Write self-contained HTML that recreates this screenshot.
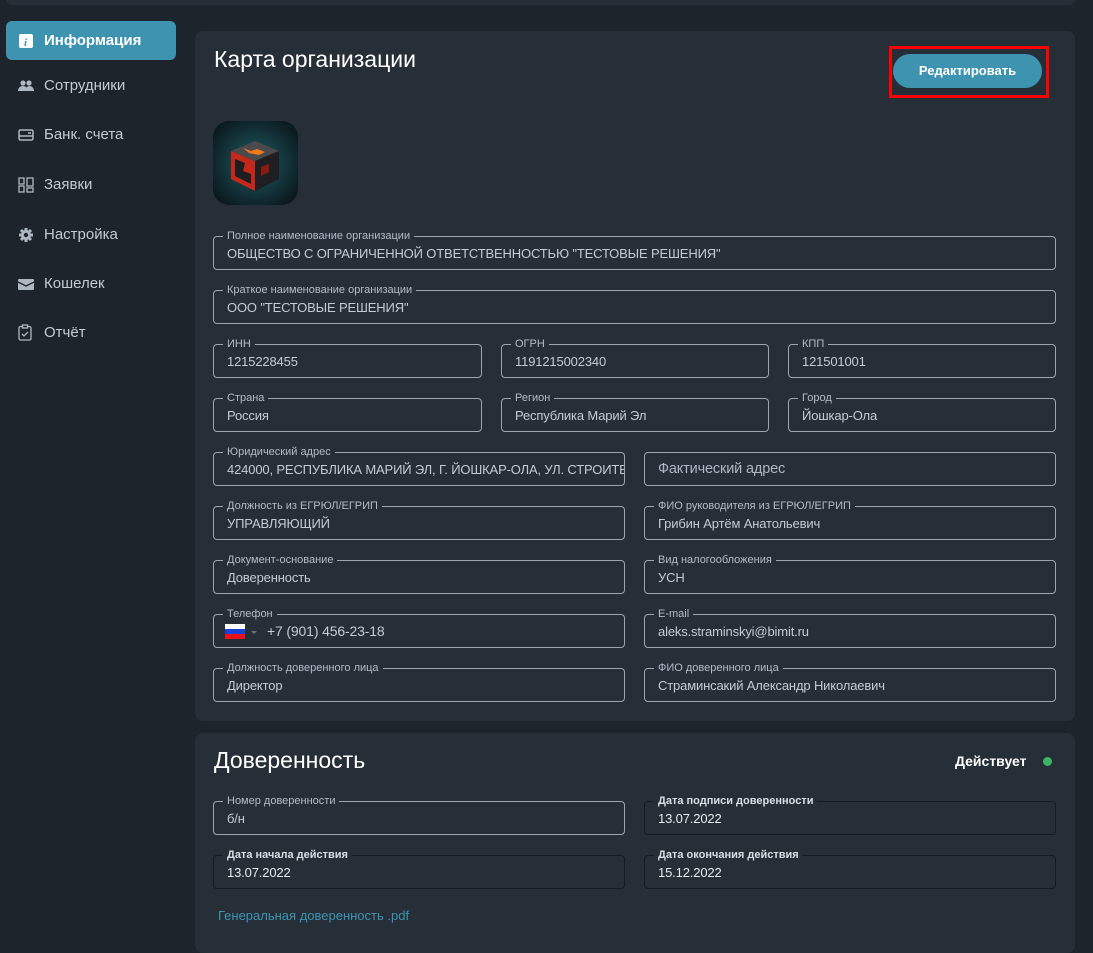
<!DOCTYPE html>
<html><head><meta charset="utf-8"><style>
*{box-sizing:border-box;margin:0;padding:0}
body{width:1093px;height:932px;background:#1d242b;font-family:"Liberation Sans",sans-serif;position:relative;overflow:hidden;color:#c3ccd5}
.topbar{position:absolute;left:6px;top:-10px;width:1069px;height:15px;background:#262f38;border-radius:6px}
.nav{position:absolute;left:6px;width:170px;height:39px;border-radius:6px;display:flex;align-items:center;font-size:15px;color:#c3ccd5}
.nav.act{background:#3e94b0;color:#fff;font-weight:bold}
.nav svg{position:absolute;left:12px}
.nav span{position:absolute;left:38px}
.card{position:absolute;left:195px;width:880px;background:#262f38;border-radius:8px}
h2{position:absolute;font-weight:normal;color:#fff;font-size:23px}
.f{position:absolute;height:34px;border:1px solid #9aa6b2;border-radius:4px;font-size:13px;letter-spacing:-0.15px;color:#c3ccd5;padding-left:13px;line-height:33px;white-space:nowrap}
.f label{position:absolute;top:-8px;left:9px;background:#262f38;padding:0 4px;font-size:11px;line-height:14px;color:#b3bdc7;letter-spacing:0}
.f .v{display:block;overflow:hidden;width:100%;padding-right:14px}
.f.d{border-color:#151b21}
.f.d label{font-weight:bold;color:#d8dee4}
.f.d .v{color:#e6ebef}
</style></head><body>
<div class="topbar"></div>

<div class="nav act" style="top:21px"><svg width="16" height="16" viewBox="0 0 16 16"><rect x="1" y="1" width="14" height="14" rx="2" fill="#fff"/><text x="6" y="13" font-size="11" font-style="italic" font-weight="bold" fill="#3e94b0" font-family="Liberation Serif">i</text></svg><span>Информация</span></div>
<div class="nav" style="top:66px"><svg width="16" height="14" viewBox="0 0 16 14"><circle cx="5" cy="4" r="2.6" fill="#aeb8c2"/><circle cx="11" cy="4" r="2.6" fill="#aeb8c2"/><path d="M0 12c0-3 2-5 5-5s5 2 5 5zM8 12c0-3 1.5-5 3-5 3 0 5 2 5 5z" fill="#aeb8c2"/></svg><span>Сотрудники</span></div>
<div class="nav" style="top:115px"><svg width="16" height="14" viewBox="0 0 16 14"><rect x="1" y="2" width="14" height="10" rx="1.5" fill="none" stroke="#aeb8c2" stroke-width="1.5"/><path d="M1 8h14M10 5h3" stroke="#aeb8c2" stroke-width="1.5"/></svg><span>Банк. счета</span></div>
<div class="nav" style="top:165px"><svg width="16" height="16" viewBox="0 0 16 16" fill="none" stroke="#aeb8c2" stroke-width="1.3"><rect x="1" y="1" width="5" height="6"/><rect x="1" y="9" width="5" height="6"/><rect x="9" y="1" width="6" height="8"/><rect x="9" y="11" width="6" height="4"/></svg><span>Заявки</span></div>
<div class="nav" style="top:215px"><svg width="16" height="16" viewBox="0 0 16 16"><circle cx="8" cy="8" r="5" fill="#aeb8c2"/><g stroke="#aeb8c2" stroke-width="3"><path d="M8 1v14M1 8h14M3 3l10 10M13 3L3 13"/></g><circle cx="8" cy="8" r="2.2" fill="#1d242b"/></svg><span>Настройка</span></div>
<div class="nav" style="top:264px"><svg width="16" height="14" viewBox="0 0 16 14"><rect x="0" y="2" width="16" height="11" rx="1" fill="#aeb8c2"/><path d="M0 5l8 4 8-4" stroke="#1d242b" stroke-width="1.3" fill="none"/></svg><span>Кошелек</span></div>
<div class="nav" style="top:313px"><svg width="14" height="17" viewBox="0 0 14 17" fill="none" stroke="#aeb8c2" stroke-width="1.3"><rect x="1" y="2.5" width="12" height="13.5" rx="1.5"/><rect x="4.5" y="1" width="5" height="3" fill="#1d242b"/><path d="M4 10l2 2 4-4"/></svg><span>Отчёт</span></div>

<div class="card" style="top:31px;height:690px">
 <h2 style="left:19px;top:15px">Карта организации</h2>
 <div style="position:absolute;left:694px;top:15px;width:160px;height:52px;border:3px solid #f00"></div>
 <div style="position:absolute;left:698px;top:23px;width:149px;height:34px;border-radius:17px;background:#3e94b0;color:#fff;font-weight:bold;font-size:13px;text-align:center;line-height:34px">Редактировать</div>
 <svg style="position:absolute;left:18px;top:90px" width="85" height="84" viewBox="0 0 85 84"><defs><radialGradient id="g" cx="50%" cy="50%" r="60%"><stop offset="0" stop-color="#1f5d66"/><stop offset="1" stop-color="#0b1a1e"/></radialGradient></defs><rect width="85" height="84" rx="16" fill="url(#g)"/><path d="M18 30l24-10 24 10v28l-24 12-24-12z" fill="#2a2a2c"/><path d="M18 30l24 10v30l-24-12z" fill="#c3281a"/><path d="M22 38l10 4-2 8 8 3v10l-16-8z" fill="#1e1e20"/><path d="M18 30l24-10 24 10-24 10z" fill="#4a4a4c"/><path d="M30 27l8 3 6-2 8 3-6 3-10-2z" fill="#f07a1a"/><path d="M42 40l24-10v28l-24 12z" fill="#1f1f21"/><path d="M48 46l8-3v8l-8 4z" fill="#8b1b12"/></svg>

 <div class="f" style="left:18px;top:205px;width:843px"><label>Полное наименование организации</label><span class="v">ОБЩЕСТВО С ОГРАНИЧЕННОЙ ОТВЕТСТВЕННОСТЬЮ "ТЕСТОВЫЕ РЕШЕНИЯ"</span></div>
 <div class="f" style="left:18px;top:259px;width:843px"><label>Краткое наименование организации</label><span class="v">ООО "ТЕСТОВЫЕ РЕШЕНИЯ"</span></div>

 <div class="f" style="left:18px;top:313px;width:269px"><label>ИНН</label><span class="v">1215228455</span></div>
 <div class="f" style="left:306px;top:313px;width:268px"><label>ОГРН</label><span class="v">1191215002340</span></div>
 <div class="f" style="left:593px;top:313px;width:268px"><label>КПП</label><span class="v">121501001</span></div>

 <div class="f" style="left:18px;top:367px;width:269px"><label>Страна</label><span class="v">Россия</span></div>
 <div class="f" style="left:306px;top:367px;width:268px"><label>Регион</label><span class="v">Республика Марий Эл</span></div>
 <div class="f" style="left:593px;top:367px;width:268px"><label>Город</label><span class="v">Йошкар-Ола</span></div>

 <div class="f" style="left:18px;top:421px;width:412px"><label>Юридический адрес</label><span class="v">424000, РЕСПУБЛИКА МАРИЙ ЭЛ, Г. ЙОШКАР-ОЛА, УЛ. СТРОИТЕЛЕЙ</span></div>
 <div class="f" style="left:449px;top:421px;width:412px;font-size:14.5px;color:#aeb8c2"><span class="v">Фактический адрес</span></div>

 <div class="f" style="left:18px;top:475px;width:412px"><label>Должность из ЕГРЮЛ/ЕГРИП</label><span class="v">УПРАВЛЯЮЩИЙ</span></div>
 <div class="f" style="left:449px;top:475px;width:412px"><label>ФИО руководителя из ЕГРЮЛ/ЕГРИП</label><span class="v">Грибин Артём Анатольевич</span></div>

 <div class="f" style="left:18px;top:529px;width:412px"><label>Документ-основание</label><span class="v">Доверенность</span></div>
 <div class="f" style="left:449px;top:529px;width:412px"><label>Вид налогообложения</label><span class="v">УСН</span></div>

 <div class="f" style="left:18px;top:583px;width:412px;padding-left:11px"><label>Телефон</label><span class="v"><svg width="20" height="15" viewBox="0 0 20 15" style="vertical-align:-3px"><rect width="20" height="5" fill="#fff"/><rect y="5" width="20" height="5" fill="#1c3fd6"/><rect y="10" width="20" height="5" fill="#e8101a"/></svg><span style="display:inline-block;margin:0 10px 0 6px;border-left:3px solid transparent;border-right:3px solid transparent;border-top:3px solid #6a747e;vertical-align:2px"></span><span style="font-size:14px">+7 (901) 456-23-18</span></span></div>
 <div class="f" style="left:449px;top:583px;width:412px"><label>E-mail</label><span class="v">aleks.straminskyi@bimit.ru</span></div>

 <div class="f" style="left:18px;top:637px;width:412px"><label>Должность доверенного лица</label><span class="v">Директор</span></div>
 <div class="f" style="left:449px;top:637px;width:412px"><label>ФИО доверенного лица</label><span class="v">Страминсакий Александр Николаевич</span></div>
</div>

<div class="card" style="top:733px;height:220px">
 <h2 style="left:19px;top:14px">Доверенность</h2>
 <div style="position:absolute;left:760px;top:20px;font-size:14px;font-weight:bold;color:#fff">Действует</div>
 <div style="position:absolute;left:848px;top:24px;width:9px;height:9px;border-radius:50%;background:#3cb465"></div>
 <div class="f" style="left:18px;top:68px;width:412px"><label>Номер доверенности</label><span class="v">б/н</span></div>
 <div class="f d" style="left:449px;top:68px;width:412px"><label>Дата подписи доверенности</label><span class="v">13.07.2022</span></div>
 <div class="f d" style="left:18px;top:122px;width:412px"><label>Дата начала действия</label><span class="v">13.07.2022</span></div>
 <div class="f d" style="left:449px;top:122px;width:412px"><label>Дата окончания действия</label><span class="v">15.12.2022</span></div>
 <div style="position:absolute;left:23px;top:175px;font-size:13px;color:#3e94b0">Генеральная доверенность .pdf</div>
</div>
</body></html>
